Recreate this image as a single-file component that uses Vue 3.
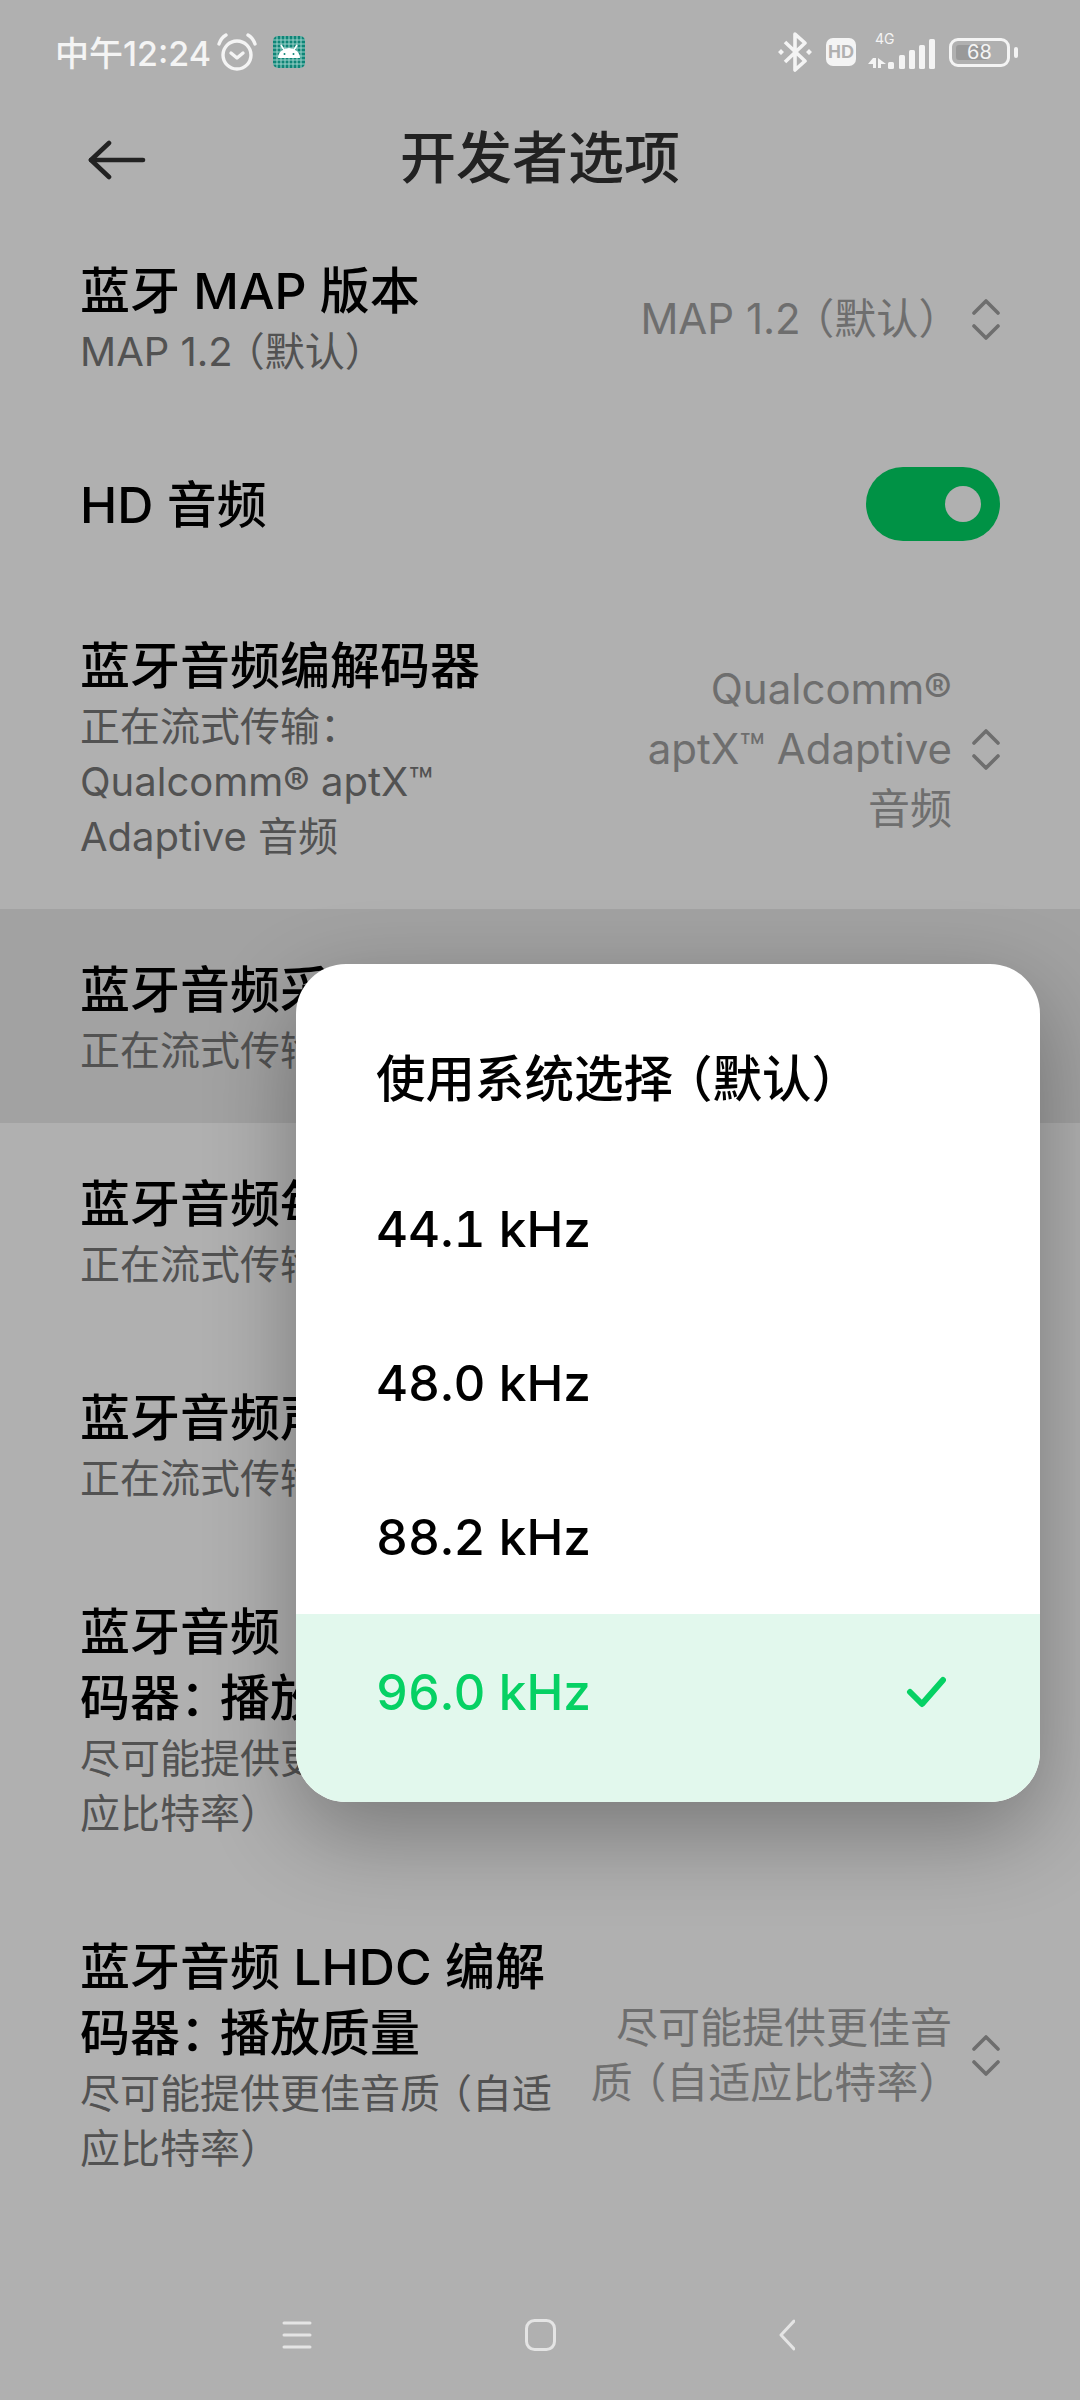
<script setup>
const rows = [
  { title: '蓝牙 MAP 版本', sub: 'MAP 1.2（默认）', value: 'MAP 1.2（默认）' },
  { title: 'HD 音频', toggle: true },
  {
    title: '蓝牙音频编解码器',
    sub: '正在流式传输：\nQualcomm® aptX™\nAdaptive 音频',
    value: 'Qualcomm®\naptX™ Adaptive\n音频',
    loose: true
  },
  { title: '蓝牙音频采样率', sub: '正在流式传输：96.0 kHz', active: true },
  { title: '蓝牙音频每样本位数', sub: '正在流式传输：24 位' },
  { title: '蓝牙音频声道模式', sub: '正在流式传输：立体声' },
  { title: '蓝牙音频 LDAC 编解\n码器：播放质量', sub: '尽可能提供更佳音质（自适\n应比特率）' },
  {
    title: '蓝牙音频 LHDC 编解\n码器：播放质量',
    sub: '尽可能提供更佳音质（自适\n应比特率）',
    value: '尽可能提供更佳音\n质（自适应比特率）'
  }
];

const options = ['使用系统选择（默认）', '44.1 kHz', '48.0 kHz', '88.2 kHz', '96.0 kHz'];
const selected = '96.0 kHz';

const gridLines = [4, 8, 12, 16, 20, 24, 28];
const bars = [
  { x: 20, y: 23, h: 7 },
  { x: 31, y: 16, h: 14 },
  { x: 41, y: 11, h: 19 },
  { x: 51, y: 6, h: 24 },
  { x: 61, y: 0, h: 30 }
];

// full-width punctuation is narrower in the system font, so it gets trimmed
function parts(text) {
  return text.split(/([：（）])/).filter(Boolean).map(t => ({
    t,
    cls: t === '（' ? 'trim-left' : (t === '）' || t === '：') ? 'trim-right' : ''
  }));
}
</script>

<template>
  <div class="page">
    <div class="status-bar">
      <div class="status-left">
        <span class="time">中午12:24</span>
        <svg class="alarm" viewBox="0 0 40 38" fill="none" stroke="#f4f4f4" stroke-width="3.4" stroke-linecap="round" stroke-linejoin="round">
          <circle cx="20" cy="22" r="14" />
          <path d="M14 20l6 5 6-5" />
          <path d="M2 11Q4 5 9 2" />
          <path d="M38 11Q36 5 31 2" />
        </svg>
        <svg class="android" viewBox="0 0 32 32">
          <rect width="32" height="32" rx="5" fill="#0f8577" />
          <g stroke="#9fd2cb" stroke-width="1">
            <path v-for="n in gridLines" :key="'v' + n" :d="`M${n} 0V32`" />
            <path v-for="n in gridLines" :key="'h' + n" :d="`M0 ${n}H32`" />
          </g>
          <path d="M5 22a11 10 0 0 1 22 0z" fill="#fff" />
          <path d="M8 9l3 5M24 9l-3 5" stroke="#fff" stroke-width="1.6" />
          <circle cx="11.500" cy="18" r="1" fill="#0f8577" />
          <circle cx="20.500" cy="18" r="1" fill="#0f8577" />
        </svg>
      </div>
      <div class="status-right">
        <svg class="bluetooth" viewBox="0 0 36 40" fill="none" stroke="#f4f4f4" stroke-width="3.600" stroke-linejoin="round">
          <path d="M8 10L28 29L18 38V2L28 11L8 30" />
          <path d="M1 20l3-3 3 3-3 3zM29 20l3-3 3 3-3 3z" fill="#f4f4f4" stroke="none" />
        </svg>
        <span class="hd">HD</span>
        <div class="signal">
          <span class="net">4G</span>
          <svg class="bars" viewBox="0 0 67 30" fill="#f4f4f4">
            <rect v-for="b in bars" :key="b.x" :x="b.x" :y="b.y" width="6" :height="b.h" rx="1.500" />
            <path d="M5 19h3v10H5v-4H0zM10 19l8 6h-5v4h-3z" />
          </svg>
        </div>
        <div class="battery"><span class="level"></span><span class="pct">68</span></div>
      </div>
    </div>

    <div class="header">
      <svg class="back" viewBox="0 0 58 40" fill="none" stroke="#222" stroke-width="4.600" stroke-linecap="round" stroke-linejoin="round">
        <path d="M3 20H55" />
        <path d="M21 3L3 20L21 37" />
      </svg>
      <div class="header-title">开发者选项</div>
    </div>

    <div class="list">
      <div v-for="row in rows" :key="row.title" :class="['row', { active: row.active, 'toggle-row': row.toggle }]">
        <div class="row-text">
          <div class="row-title"><span v-for="(p, i) in parts(row.title)" :key="i" :class="p.cls">{{ p.t }}</span></div>
          <div v-if="row.sub" class="row-sub"><span v-for="(p, i) in parts(row.sub)" :key="i" :class="p.cls">{{ p.t }}</span></div>
        </div>
        <div v-if="row.value" class="row-value">
          <span :class="['value-text', { loose: row.loose }]"><span v-for="(p, i) in parts(row.value)" :key="i" :class="p.cls">{{ p.t }}</span></span>
          <svg class="chevrons" viewBox="0 0 28 42" fill="none" stroke="#6e6e6e" stroke-width="3.600" stroke-linecap="round" stroke-linejoin="round">
            <path d="M2 15L14 3L26 15" />
            <path d="M2 28L14 40L26 28" />
          </svg>
        </div>
        <div v-if="row.toggle" class="toggle"><span class="thumb"></span></div>
      </div>
    </div>

    <div class="nav">
      <svg class="nav-menu" viewBox="0 0 30 30" fill="none" stroke="#e4e4e4" stroke-width="3" stroke-linecap="round">
        <path d="M2 3H28M2 15H28M2 27H28" />
      </svg>
      <svg class="nav-home" viewBox="0 0 31 32" fill="none" stroke="#e4e4e4" stroke-width="3">
        <rect x="1.500" y="1.500" width="28" height="29" rx="8" />
      </svg>
      <svg class="nav-back" viewBox="0 0 16 32" fill="none" stroke="#e4e4e4" stroke-width="3" stroke-linecap="round" stroke-linejoin="round">
        <path d="M15 2L2 16L15 30" />
      </svg>
    </div>

    <div class="dialog">
      <div
        v-for="opt in options"
        :key="opt"
        :class="['option', { selected: opt === selected }]"
      >
        <span><span v-for="(p, i) in parts(opt)" :key="i" :class="p.cls">{{ p.t }}</span></span>
        <svg v-if="opt === selected" class="check" viewBox="0 0 40 32" fill="none" stroke="#06d164" stroke-width="6" stroke-linecap="round" stroke-linejoin="round">
          <path d="M4 16L16 28L37 4" />
        </svg>
      </div>
    </div>
  </div>
</template>

<style>
html,
body {
  margin: 0;
  background: #b0b0b0;
}
</style>

<style scoped>
.page {
  position: relative;
  display: flex;
  flex-direction: column;
  width: 1080px;
  height: 2400px;
  overflow: hidden;
  background: #b0b0b0;
  font-family: Inter, "Noto Sans CJK SC", sans-serif;
}

.trim-left {
  margin-left: -0.2em;
}

.trim-right {
  margin-right: -0.2em;
}

.status-bar {
  display: flex;
  justify-content: space-between;
  align-items: center;
  height: 104px;
  padding: 0 63px 0 55px;
  flex-shrink: 0;
}

.status-left,
.status-right {
  display: flex;
  align-items: center;
}

.time {
  color: #f4f4f4;
  font-size: 34px;
  font-weight: 500;
  white-space: nowrap;
  margin-top: -2px;
}

.alarm {
  width: 40px;
  height: 38px;
  margin-left: 6px;
}

.android {
  width: 32px;
  height: 32px;
  margin-left: 16px;
}

.bluetooth {
  width: 36px;
  height: 40px;
}

.hd {
  width: 30px;
  height: 28px;
  margin-left: 13px;
  border-radius: 7px;
  background: #f4f4f4;
  color: #b0b0b0;
  font: bold 18px/28px "Liberation Sans", sans-serif;
  text-align: center;
}

.signal {
  position: relative;
  width: 67px;
  height: 33px;
  margin-left: 12px;
}

.net {
  position: absolute;
  left: 7px;
  top: -5px;
  color: #f4f4f4;
  font-size: 14px;
  line-height: 16px;
}

.bars {
  position: absolute;
  left: 0;
  bottom: 0;
  width: 67px;
  height: 30px;
}

.battery {
  position: relative;
  width: 61px;
  height: 29px;
  margin-left: 14px;
  margin-right: 7px;
  box-sizing: border-box;
  border: 3px solid #f4f4f4;
  border-radius: 9px;
}

.battery::after {
  content: "";
  position: absolute;
  right: -11px;
  top: 6px;
  width: 4px;
  height: 11px;
  border-radius: 2px;
  background: #f4f4f4;
}

.level {
  position: absolute;
  left: 4px;
  top: 4px;
  bottom: 4px;
  width: 32px;
  border-radius: 3px;
  background: #999;
}

.pct {
  position: absolute;
  left: 15px;
  top: 0;
  color: #f4f4f4;
  font-size: 20px;
  line-height: 23px;
}

.header {
  display: grid;
  grid-template-columns: 1fr auto 1fr;
  align-items: center;
  height: 106px;
  padding: 2px 88px 0;
  box-sizing: border-box;
  flex-shrink: 0;
}

.back {
  width: 58px;
  height: 40px;
  margin-top: 3px;
}

.header-title {
  color: #222;
  font-size: 56px;
  font-weight: 500;
  line-height: 70px;
}

.row {
  display: flex;
  justify-content: space-between;
  align-items: center;
  padding: 48px 80px 45px;
}

.row.toggle-row {
  padding-bottom: 47px;
}

.row.active {
  background: #a2a2a2;
}

.row-title {
  color: #000;
  font-size: 50px;
  font-weight: 500;
  line-height: 66px;
  white-space: pre;
}

.row-sub {
  color: #525252;
  font-size: 40px;
  line-height: 55px;
  white-space: pre;
}

.row-value {
  display: flex;
  align-items: center;
  gap: 20px;
}

.value-text {
  color: #6e6e6e;
  font-size: 42px;
  line-height: 55px;
  text-align: right;
  white-space: pre;
}

.value-text.loose {
  line-height: 60px;
}

.chevrons {
  width: 28px;
  height: 42px;
  flex-shrink: 0;
}

.toggle {
  position: relative;
  width: 134px;
  height: 74px;
  margin: -9px 0 -7px;
  border-radius: 37px;
  background: #009245;
}

.thumb {
  position: absolute;
  right: 19px;
  top: 19px;
  width: 36px;
  height: 36px;
  border-radius: 50%;
  background: #b0b0b0;
}

.nav {
  display: grid;
  grid-template-columns: 243px 254px 16px;
  align-items: center;
  margin-top: auto;
  padding: 0 0 49px 282px;
}

.nav-menu {
  width: 30px;
  height: 30px;
}

.nav-home {
  width: 31px;
  height: 32px;
}

.nav-back {
  width: 16px;
  height: 32px;
}

.dialog {
  position: absolute;
  left: 296px;
  top: 964px;
  width: 744px;
  padding-top: 34px;
  box-sizing: border-box;
  overflow: hidden;
  border-radius: 50px;
  background: #fff;
  box-shadow: 0 30px 90px rgba(0, 0, 0, 0.32);
}

.option {
  display: flex;
  justify-content: space-between;
  align-items: center;
  height: 154px;
  padding: 0 94px 0 80px;
  color: #000;
  font-size: 49.5px;
  font-weight: 500;
  font-variant-numeric: tabular-nums;
  white-space: nowrap;
}

.option.selected {
  height: 188px;
  padding-bottom: 32px;
  box-sizing: border-box;
  background: #e2f8ed;
  color: #06d164;
}

.check {
  width: 40px;
  height: 32px;
}
</style>
